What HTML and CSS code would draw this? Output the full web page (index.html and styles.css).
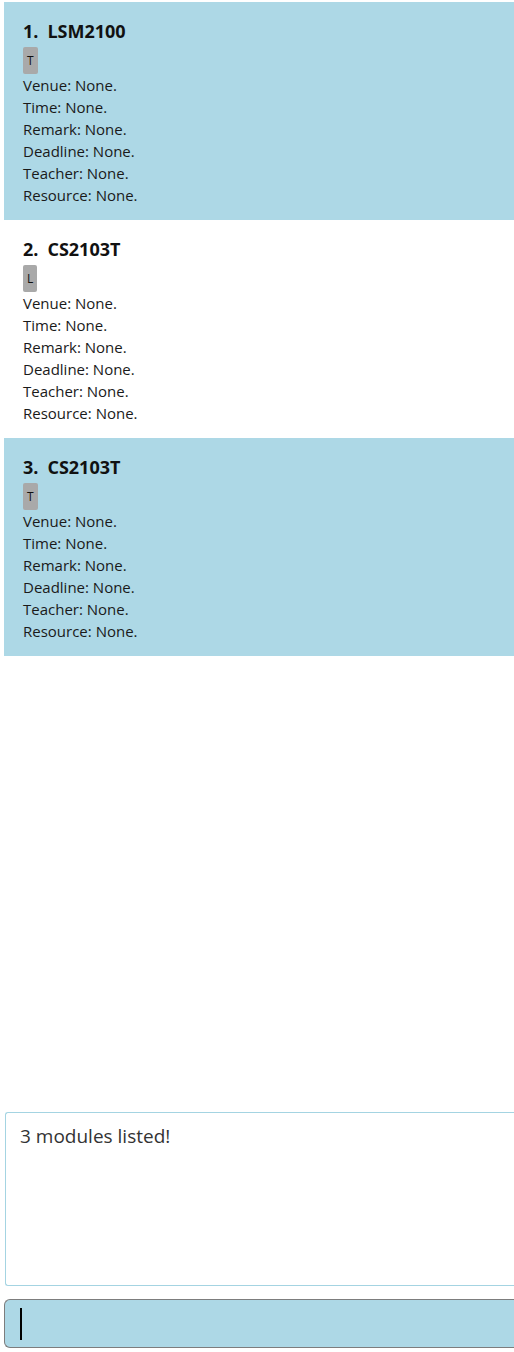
FILE: index.html
```html
<!DOCTYPE html>
<html>
<head>
<meta charset="utf-8">
<link rel="stylesheet" href="styles.css">
</head>
<body>
<div class="app">
  <div class="list">
    <div class="card odd">
      <div class="title"><span class="num">1.</span><span>LSM2100</span></div>
      <div class="tags"><span class="tag">T</span></div>
      <div class="field">Venue: None.</div>
      <div class="field">Time: None.</div>
      <div class="field">Remark: None.</div>
      <div class="field">Deadline: None.</div>
      <div class="field">Teacher: None.</div>
      <div class="field">Resource: None.</div>
    </div>
    <div class="card even">
      <div class="title"><span class="num">2.</span><span>CS2103T</span></div>
      <div class="tags"><span class="tag">L</span></div>
      <div class="field">Venue: None.</div>
      <div class="field">Time: None.</div>
      <div class="field">Remark: None.</div>
      <div class="field">Deadline: None.</div>
      <div class="field">Teacher: None.</div>
      <div class="field">Resource: None.</div>
    </div>
    <div class="card odd">
      <div class="title"><span class="num">3.</span><span>CS2103T</span></div>
      <div class="tags"><span class="tag">T</span></div>
      <div class="field">Venue: None.</div>
      <div class="field">Time: None.</div>
      <div class="field">Remark: None.</div>
      <div class="field">Deadline: None.</div>
      <div class="field">Teacher: None.</div>
      <div class="field">Resource: None.</div>
    </div>
  </div>
  <div class="result">3 modules listed!</div>
  <div class="command"><span class="caret"></span></div>
</div>
</body>
</html>
```

FILE: styles.css
```css
html, body {
  margin: 0;
  padding: 0;
  background: #ffffff;
}
.app {
  height: 1352px;
  display: flex;
  flex-direction: column;
  font-family: "Open Sans", "Noto Sans", sans-serif;
  color: #1a1a1a;
}
.list {
  flex: 1;
  padding: 2px 0 0 4px;
}
.card {
  height: 218px;
  box-sizing: border-box;
  padding: 18px 0 0 19px;
}
.card.odd {
  background: #add8e6;
}
.card.even {
  background: #ffffff;
}
.title {
  font-size: 18px;
  font-weight: 700;
  line-height: 22px;
  display: flex;
  gap: 9px;
  color: #111;
}
.tags {
  margin-top: 5px;
  height: 27px;
  display: flex;
}
.tag {
  background: #a9a9a9;
  border-radius: 2px;
  font-size: 12px;
  line-height: 27px;
  height: 27px;
  padding: 0 4px;
  color: #111;
}
.field {
  font-size: 15px;
  line-height: 22px;
  color: #1a1a1a;
}
.result {
  margin: 0 0 13px 5px;
  height: 174px;
  box-sizing: border-box;
  border: 1px solid #a4d4e2;
  border-right: none;
  border-radius: 3px 0 0 3px;
  padding: 10px 0 0 14px;
  font-size: 19px;
  line-height: 26px;
  color: #333;
}
.command {
  margin: 0 0 4px 4px;
  height: 49px;
  box-sizing: border-box;
  background: #add8e6;
  border: 1px solid #7d7d7d;
  border-right: none;
  border-radius: 6px 0 0 6px;
  padding: 8px 0 0 15px;
}
.caret {
  display: block;
  width: 2px;
  height: 32px;
  background: #000;
}
```
